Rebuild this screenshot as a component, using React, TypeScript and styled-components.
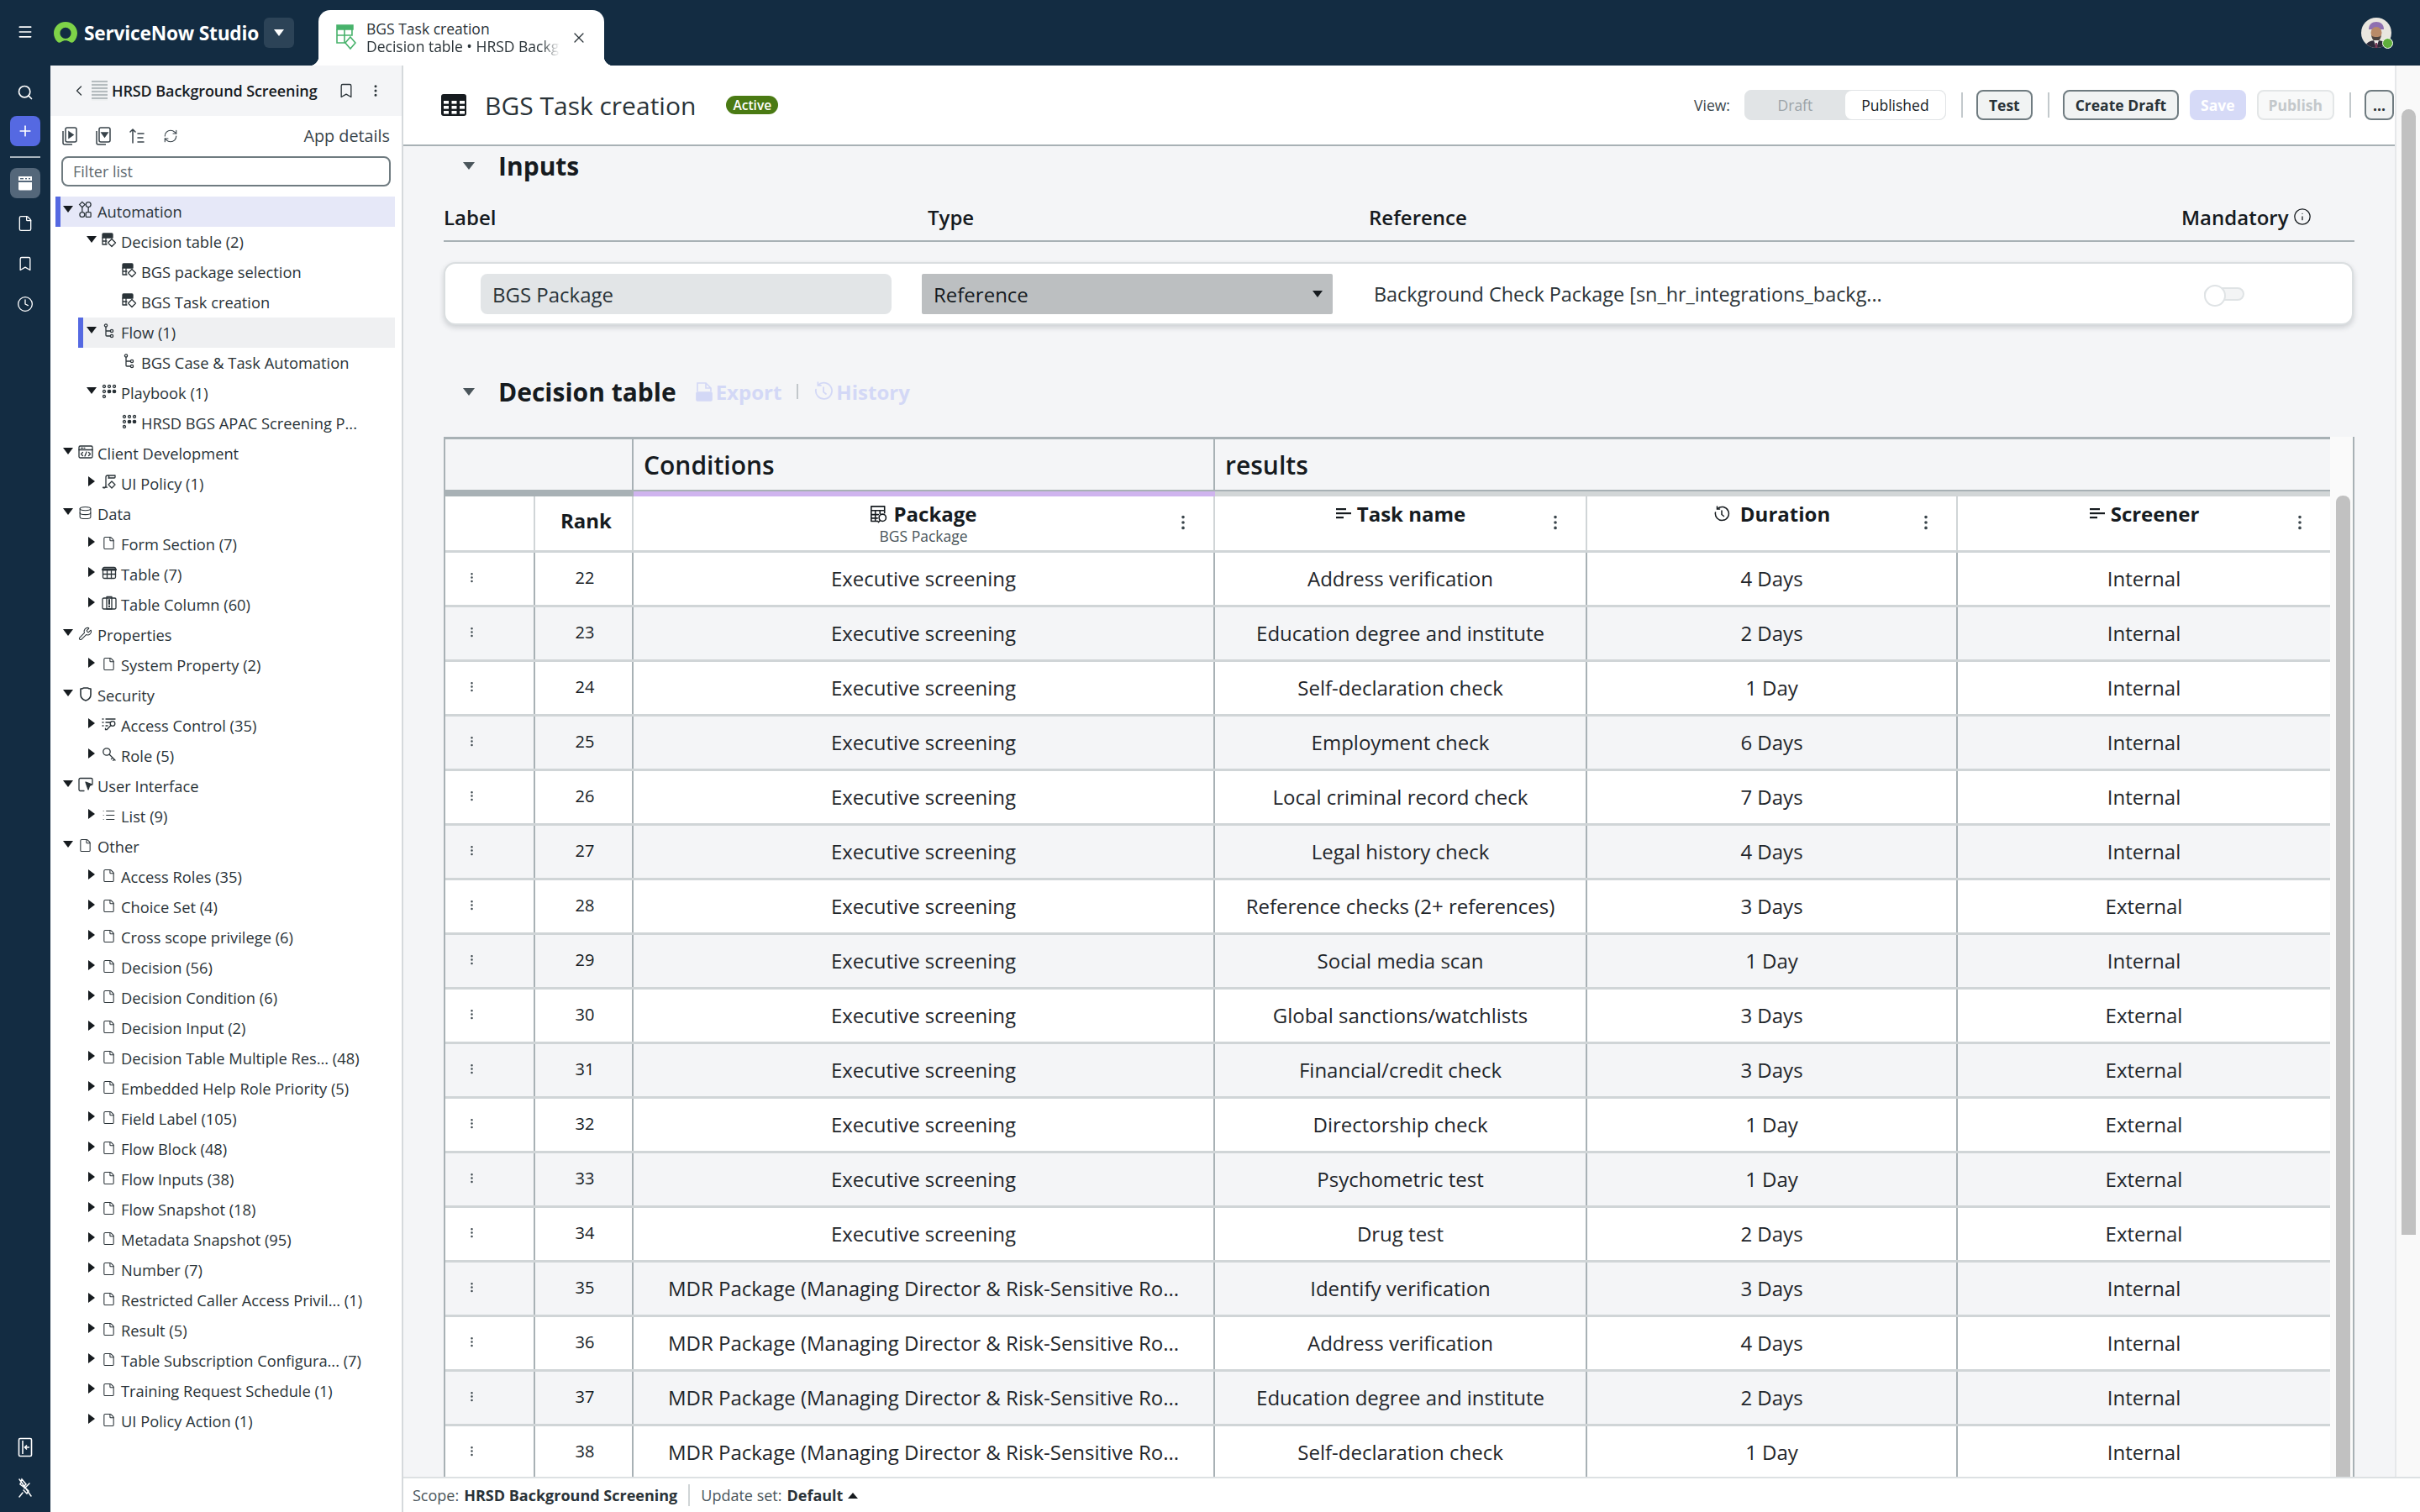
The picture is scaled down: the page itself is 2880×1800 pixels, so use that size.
import React from 'react'
import styled, { createGlobalStyle } from 'styled-components'
import { Bookmark, ChevronLeft, Clock, Database, EllipsisVertical, File, Info, List, Menu, Plus, RefreshCw, Search, Wrench, X } from 'lucide-react'

const GlobalStyle = createGlobalStyle`
  html, body { margin: 0; padding: 0; background: #fff; }
  body { font-family: "Open Sans", "Liberation Sans", sans-serif; color: #161b1f; }
  * { box-sizing: border-box; }
`

const navy = '#132c42'
const lineDark = '#a8b1b5'
const lineLight = '#d0d5d7'

const Shell = styled.div`
  width: 2880px;
  height: 1800px;
  display: flex;
  flex-direction: column;
  overflow: hidden;
`

/* top bar */
const TopBar = styled.header`
  height: 78px;
  flex: none;
  background: ${navy};
  display: flex;
  align-items: flex-end;
  color: #fff;
`
const MenuSlot = styled.div`
  width: 60px;
  height: 78px;
  display: flex;
  align-items: center;
  justify-content: center;
  padding-bottom: 2px;
`
const Brand = styled.div`
  height: 78px;
  display: flex;
  align-items: center;
  gap: 8px;
  margin-left: 4px;
  font-size: 22.7px;
  font-weight: 700;
  letter-spacing: -0.2px;
`
const BrandCaret = styled.div`
  width: 36px;
  height: 36px;
  border-radius: 6px;
  background: #2c4357;
  margin-left: -2px;
  display: flex;
  align-items: center;
  justify-content: center;
`
const CaretDown = styled.span<{ $size?: number; $color?: string }>`
  display: block;
  width: 0;
  height: 0;
  border-left: ${p => p.$size ?? 6}px solid transparent;
  border-right: ${p => p.$size ?? 6}px solid transparent;
  border-top: ${p => (p.$size ?? 6) + 2}px solid ${p => p.$color ?? '#161b1f'};
`
const CaretRight = styled.span`
  display: block;
  width: 0;
  height: 0;
  border-top: 6px solid transparent;
  border-bottom: 6px solid transparent;
  border-left: 8px solid #161b1f;
`
const CaretUp = styled.span`
  display: block;
  width: 0;
  height: 0;
  border-left: 6px solid transparent;
  border-right: 6px solid transparent;
  border-bottom: 7px solid #161b1f;
`
const Tab = styled.div`
  position: relative;
  width: 340px;
  height: 66px;
  margin-left: 29px;
  background: #fff;
  border-radius: 14px 14px 0 0;
  color: #2a3338;
  display: flex;
  align-items: center;
  padding: 0 20px 0 21px;
  gap: 12px;
  &::before, &::after {
    content: '';
    position: absolute;
    bottom: 0;
    width: 11px;
    height: 11px;
  }
  &::before { left: -11px; background: radial-gradient(circle at 0 0, transparent 11px, #fff 11.5px); }
  &::after { right: -11px; background: radial-gradient(circle at 100% 0, transparent 11px, #fff 11.5px); }
`
const TabText = styled.div`
  width: 238px;
  margin-right: -6px;
  font-size: 17.5px;
  line-height: 21px;
  white-space: nowrap;
`
const TabSub = styled.div`
  -webkit-mask-image: linear-gradient(to right, #000 88%, transparent 97%);
  mask-image: linear-gradient(to right, #000 88%, transparent 97%);
`
const Spacer = styled.div`
  flex: 1;
`
const AvatarSlot = styled.div`
  position: relative;
  width: 36px;
  height: 36px;
  margin: 0 34px 21px 0;
`
const AvatarBadge = styled.span`
  position: absolute;
  right: -2px;
  bottom: -1px;
  width: 13px;
  height: 13px;
  border-radius: 50%;
  background: #5fae3c;
  border: 1px solid #fff;
`

/* body */
const Body = styled.div`
  flex: 1;
  min-height: 0;
  display: flex;
`
const Rail = styled.nav`
  width: 60px;
  flex: none;
  background: ${navy};
  color: #fff;
  display: flex;
  flex-direction: column;
  align-items: center;
  padding-top: 14px;
`
const RailIcon = styled.div<{ $bg?: string; $mb?: number }>`
  width: 36px;
  height: 36px;
  border-radius: 8px;
  background: ${p => p.$bg ?? 'transparent'};
  display: flex;
  align-items: center;
  justify-content: center;
  margin-bottom: ${p => p.$mb ?? 12}px;
`
const RailDivider = styled.div`
  width: 36px;
  height: 2px;
  background: #a8b4bd;
  margin-bottom: 12px;
`
const RailGap = styled.div`
  flex: 1;
`

/* sidebar */
const Side = styled.aside`
  width: 420px;
  flex: none;
  background: #fff;
  border-right: 2px solid #d5d9dc;
  display: flex;
  flex-direction: column;
`
const SideHead = styled.div`
  height: 60px;
  background: #f4f5f7;
  display: flex;
  align-items: center;
  padding: 0 22px 0 24px;
  color: #2a3338;
`
const SideTitle = styled.div`
  flex: 1;
  margin-left: 5px;
  font-size: 18px;
  font-weight: 600;
  color: #161b1f;
  white-space: nowrap;
  letter-spacing: -0.1px;
`
const AppLogo = styled.div`
  margin-left: 5px;
  width: 19px;
  height: 24px;
  background: repeating-linear-gradient(to bottom, #b5bcbf 0 2px, #eef0f1 2px 4px);
`
const SideTools = styled.div`
  height: 48px;
  display: flex;
  align-items: center;
  padding: 0 14px 0 14px;
  gap: 22px;
  color: #38434a;
`
const AppDetails = styled.div`
  margin-left: auto;
  margin-top: -2px;
  font-size: 19.8px;
  color: #38434a;
`
const FilterBox = styled.div`
  margin: 0 13px 0 13px;
  height: 36px;
  border: 2px solid #6f7b80;
  border-radius: 8px;
  padding-left: 12px;
  display: flex;
  align-items: center;
  font-size: 18px;
  color: #5e696e;
`
const Tree = styled.div`
  margin: 12px 8px 0 6px;
`
const TreeRow = styled.div<{ $level: number; $mark?: 'primary' | 'secondary' }>`
  height: 36px;
  display: flex;
  align-items: center;
  gap: 5.5px;
  padding-bottom: 2px;
  font-size: 18.3px;
  color: #2a3338;
  white-space: nowrap;
  margin-left: ${p => (p.$mark === 'secondary' ? 27 : 0)}px;
  padding-left: ${p => (p.$mark === 'secondary' ? 4 : [3, 31, 55][p.$level])}px;
  border-left: 6px solid ${p => (p.$mark ? '#5569e2' : 'transparent')};
  background: ${p => (p.$mark === 'primary' ? '#e6e8f8' : p.$mark === 'secondary' ? '#eff0f2' : 'transparent')};
`
const ArrowSlot = styled.span`
  width: 12px;
  flex: none;
  display: flex;
  justify-content: center;
  margin-top: -5px;
`
const TreeIcon = styled.span`
  width: 18px;
  height: 18px;
  flex: none;
  display: flex;
  align-items: center;
  justify-content: center;
  margin-top: -2px;
  color: #2a3338;
`

/* main */
const Main = styled.main`
  flex: 1;
  min-width: 0;
  display: flex;
  flex-direction: column;
`
const MainFrame = styled.div`
  position: relative;
  flex: 1;
  min-height: 0;
  display: flex;
  flex-direction: column;
  overflow: hidden;
  background: #f4f5f7;
  padding-right: 30px;
`
const PageScroll = styled.div`
  position: absolute;
  top: 0;
  right: 0;
  bottom: 0;
  width: 30px;
  background: #f9f9f9;
  border-left: 2px solid #e6e8ea;
`
const PageThumb = styled.div`
  position: absolute;
  top: 52px;
  left: 6px;
  width: 17px;
  height: 1340px;
  border-radius: 9px 9px 0 0;
  background: #c1c1c1;
`
const TitleBar = styled.div`
  height: 96px;
  flex: none;
  background: #fff;
  border-bottom: 2px solid ${lineDark};
  display: flex;
  align-items: center;
  padding: 0 1px 0 45px;
`
const PageTitle = styled.h1`
  margin: 0 0 0 22px;
  font-size: 30px;
  font-weight: 400;
  color: #2a3338;
`
const ActiveBadge = styled.span`
  margin-left: 36px;
  height: 22px;
  width: 62px;
  border-radius: 11px;
  background: #4a7a13;
  color: #fff;
  font-size: 15.5px;
  font-weight: 600;
  display: flex;
  align-items: center;
  justify-content: center;
`
const ViewLabel = styled.span`
  margin-left: auto;
  font-size: 17.5px;
  color: #3b464c;
  margin-right: 17px;
`
const Segments = styled.div`
  width: 240px;
  height: 36px;
  border-radius: 8px;
  background: #e1e4e6;
  border: 1px solid #e1e4e6;
  display: flex;
`
const Segment = styled.div<{ $on?: boolean }>`
  flex: 1;
  display: flex;
  align-items: center;
  justify-content: center;
  font-size: 17.5px;
  border-radius: 8px;
  font-weight: 500;
  color: ${p => (p.$on ? '#161b1f' : '#9ba3a8')};
  background: ${p => (p.$on ? '#fff' : 'transparent')};
`
const BarSep = styled.span`
  width: 2px;
  height: 30px;
  background: #c3c9cc;
  margin: 0 16px 0 18px;
`
const ActionButton = styled.button<{ $kind?: 'solid' | 'ghost' | 'more' }>`
  height: 36px;
  width: ${p => (p.$kind === 'more' ? '35px' : 'auto')};
  padding: 0 ${p => (p.$kind === 'more' ? 0 : p.$kind === 'solid' ? 11 : p.$kind === 'ghost' ? 12 : 13)}px;
  border-radius: 8px;
  font-family: inherit;
  font-size: 17.5px;
  font-weight: 700;
  white-space: nowrap;
  color: ${p => (p.$kind === 'solid' ? '#fff' : p.$kind === 'ghost' ? '#c3c8cb' : '#2a3338')};
  background: ${p => (p.$kind === 'solid' ? '#d6daf7' : p.$kind === 'ghost' ? '#f8f9f9' : '#f1f3f3')};
  border: 2px solid ${p => (p.$kind === 'solid' ? '#d6daf7' : p.$kind === 'ghost' ? '#e3e6e7' : '#6f7b80')};
`
const ButtonGroup = styled.div`
  display: flex;
  gap: 13px;
`
const Content = styled.div`
  flex: 1;
  min-height: 0;
  padding: 3px 0 0 48px;
  overflow: hidden;
`
const SectionHead = styled.div`
  height: 40px;
  display: flex;
  align-items: center;
  padding-left: 23px;
`
const SectionTitle = styled.h2`
  margin: 0 22px 0 28px;
  font-size: 30px;
  font-weight: 700;
  color: #161b1f;
  white-space: nowrap;
`
const SectionLink = styled.span`
  display: flex;
  align-items: center;
  gap: 3px;
  font-size: 24px;
  font-weight: 700;
  color: #d3d8f6;
`
const LinkSep = styled.span`
  width: 2px;
  height: 18px;
  margin: 0 18px;
  background: #c2c7cb;
`
const InputColumns = styled.div`
  margin-top: 23px;
  width: 2274px;
  height: 48px;
  padding-bottom: 10px;
  border-bottom: 2px solid ${lineDark};
  display: grid;
  grid-template-columns: 576px 525px 967px 1fr;
  align-items: center;
  font-size: 24px;
  font-weight: 600;
`
const MandatoryHead = styled.span`
  display: flex;
  align-items: center;
  gap: 5px;
`
const InputCard = styled.div`
  margin-top: 24px;
  width: 2273px;
  height: 75px;
  background: #fff;
  border: 2px solid #dadee0;
  border-radius: 14px;
  box-shadow: 0 3px 6px rgba(30, 40, 50, 0.18);
  display: flex;
  align-items: center;
  padding: 1px 0 0 42px;
  font-size: 24px;
`
const LabelField = styled.div`
  width: 489px;
  height: 48px;
  border-radius: 8px;
  background: #e2e5e7;
  padding-left: 14px;
  display: flex;
  align-items: center;
  color: #2a3338;
`
const TypeField = styled.div`
  width: 489px;
  height: 48px;
  margin-left: 36px;
  border-radius: 2px;
  background: #bcbfc1;
  padding: 0 12px 0 14px;
  display: flex;
  align-items: center;
  justify-content: space-between;
  color: #161b1f;
`
const ReferenceText = styled.div`
  margin-left: 49px;
  width: 988px;
  font-size: 23.4px;
  white-space: nowrap;
  color: #2a3338;
`
const Toggle = styled.div`
  position: relative;
  width: 48px;
  height: 16px;
  border: 2px solid #dfe3e5;
  border-radius: 8px;
  background: #f3f4f5;
  &::before {
    content: '';
    position: absolute;
    left: -2px;
    top: -5px;
    width: 22px;
    height: 22px;
    border-radius: 50%;
    background: #fff;
    border: 2px solid #dfe3e5;
  }
`
const DecisionHead = styled(SectionHead)`
  margin-top: 59px;
`
const TableFrame = styled.div`
  margin-top: 34px;
  width: 2274px;
  display: flex;
`
const TableArea = styled.div`
  width: 2245px;
  flex: none;
  border-left: 2px solid ${lineDark};
  border-top: 3px solid ${lineDark};
`
const InnerTrack = styled.div`
  width: 29px;
  flex: none;
  background: #fafafa;
  border-right: 2px solid ${lineDark};
  padding: 70px 0 0 7px;
`
const InnerThumb = styled.div`
  height: 1400px;
  width: 17px;
  border-radius: 8px 8px 0 0;
  background: #c1c1c1;
`
const gridCols = '107px 117px 692px 443px 441px 443px'
const GroupRow = styled.div`
  display: grid;
  grid-template-columns: 224px 692px 1327px;
  height: 60px;
`
const GroupCell = styled.div<{ $line?: boolean }>`
  display: flex;
  align-items: center;
  padding-left: 12px;
  font-size: 30px;
  font-weight: 600;
  color: #161b1f;
  border-right: ${p => (p.$line ? `2px solid ${lineDark}` : 'none')};
`
const StripeRow = styled.div`
  display: grid;
  grid-template-columns: 224px 692px 1327px;
  height: 8px;
  border-top: 2px solid ${lineDark};
`
const Stripe = styled.div<{ $color: string }>`
  background: ${p => p.$color};
`
const GridRow = styled.div<{ $shade?: boolean; $h: number }>`
  display: grid;
  grid-template-columns: ${gridCols};
  height: ${p => p.$h}px;
  background: ${p => (p.$shade ? '#f4f5f7' : '#fff')};
  border-bottom: 3px solid ${lineLight};
`
const Cell = styled.div<{ $last?: boolean }>`
  display: flex;
  align-items: center;
  justify-content: center;
  padding-bottom: 2px;
  white-space: nowrap;
  font-size: 24px;
  color: #1f262b;
  border-right: ${p => (p.$last ? 'none' : `2px solid ${lineDark}`)};
`
const HandleCell = styled(Cell)`
  padding: 0 42px 4px 0;
  color: #3b464c;
`
const RankCell = styled(Cell)`
  font-size: 20px;
  padding: 0 0 3px 3px;
  color: #161b1f;
`
const HeadCell = styled.div<{ $last?: boolean }>`
  position: relative;
  display: flex;
  flex-direction: column;
  align-items: center;
  padding-top: 6px;
  background: #fff;
  border-right: ${p => (p.$last ? 'none' : `2px solid ${lineLight}`)};
`
const RankHead = styled.div`
  display: flex;
  align-items: center;
  justify-content: center;
  padding: 0 0 8px 6px;
  font-size: 24px;
  font-weight: 700;
  color: #161b1f;
  border-right: 2px solid ${lineLight};
`
const HeadLine = styled.div<{ $gap?: number }>`
  display: flex;
  align-items: center;
  gap: ${p => p.$gap ?? 6}px;
  font-size: 24px;
  line-height: 30px;
  font-weight: 700;
  color: #161b1f;
`
const HeadSub = styled.div`
  font-size: 17.5px;
  line-height: 22px;
  color: #4a555b;
`
const HeadMenu = styled.span`
  position: absolute;
  right: 25px;
  top: 20px;
  color: #3b464c;
`
const StatusBar = styled.footer`
  height: 42px;
  flex: none;
  background: #fff;
  border-top: 2px solid #dde1e3;
  display: flex;
  align-items: center;
  padding-left: 11px;
  font-size: 18px;
  color: #4a555b;
`
const StatusStrong = styled.b`
  margin-left: 6px;
  font-weight: 700;
  color: #2a3338;
`
const StatusCaret = styled.span`
  margin-left: 6px;
`
const StatusSep = styled.span`
  width: 2px;
  height: 26px;
  margin: 0 13px;
  background: #d0d5d7;
`
const KebabGap = styled.span`
  display: flex;
  margin-left: 16px;
`

/* hand drawn icons */
const Svg = ({ s = 18, children }: { s?: number; children: React.ReactNode }) => (
  <svg width={s} height={s} viewBox="0 0 18 18" fill="none" stroke="currentColor" strokeWidth="1.3" strokeLinecap="round" strokeLinejoin="round">
    {children}
  </svg>
)
const IconAutomation = () => (
  <svg width="17" height="22" viewBox="0 0 18 24" fill="none" stroke="currentColor" strokeWidth="1.4">
    <path d="M5 1.500l3.500 3.500L5 8.500 1.500 5z" />
    <circle cx="13" cy="5" r="3.200" />
    <circle cx="5" cy="18" r="3.200" />
    <rect x="9.800" y="14.800" width="6.400" height="6.400" rx="1" />
    <path d="M5 8.500v6M13 8.200v6.600" />
  </svg>
)
const IconDecision = () => (
  <Svg>
    <path d="M2 1h10a1 1 0 0 1 1 1v4H1V2a1 1 0 0 1 1-1z" fill="currentColor" />
    <path d="M1 6v8h5M1 10h5M5 6v8" />
    <path d="M12 7.500l4.500 4.500-4.500 4.500L7.500 12z" />
  </Svg>
)
const IconFlow = () => (
  <Svg>
    <circle cx="5" cy="2.500" r="1.600" />
    <path d="M5 4.100V14a1 1 0 0 0 1 1h4M5 9h5" />
    <circle cx="12" cy="9" r="1.600" />
    <circle cx="12" cy="15" r="1.600" />
  </Svg>
)
const IconPlaybook = () => (
  <Svg>
    {[[3, 3], [9, 3], [15, 3], [3, 9], [3, 15]].map(([x, y]) => <circle key={`${x}${y}`} cx={x} cy={y} r="1.500" />)}
    {[[9, 9], [15, 9]].map(([x, y]) => <circle key={`${x}${y}`} cx={x} cy={y} r="1.700" fill="currentColor" />)}
  </Svg>
)
const IconClient = () => (
  <Svg>
    <rect x="1" y="2" width="16" height="14" rx="1.500" />
    <path d="M1 6.500h16M3.500 4.300h2M7 4.300h1M5.500 9.500l-2 2 2 2M12.500 9.500l2 2-2 2M10 9l-2 5" />
  </Svg>
)
const IconPolicy = () => (
  <Svg>
    <path d="M5 14V3a2 2 0 0 1 2-2h9v2a1 1 0 0 1-1 1H8" />
    <path d="M8 1.500A2 2 0 0 1 8.500 4M5 14a2 2 0 0 1-3.500 1.200h5" />
    <path d="M12 8l4 4-4 4-4-4z" />
  </Svg>
)
const IconColumn = () => (
  <Svg>
    <rect x="1" y="3" width="16" height="13" rx="1.500" />
    <path d="M6 1.500h6V16H6z" />
    <path d="M9 5v5M9 12.500v.8" strokeWidth="2" />
  </Svg>
)
const IconAccess = () => (
  <Svg>
    <path d="M1 3h1M5 3h11M1 7h1M5 7h5M1 11h1M5 11h2" />
    <circle cx="13" cy="8.500" r="2.800" />
    <path d="M11 10.500l-5 5.200h-1.500v-1.500" />
  </Svg>
)
const IconKey = () => (
  <Svg>
    <circle cx="6" cy="6" r="4.200" />
    <path d="M9 9l7 7M13 13l-1.600 1.600M15 15l-1.400 1.400" />
  </Svg>
)
const IconUi = () => (
  <Svg>
    <path d="M7 16.500H2.500a1.500 1.500 0 0 1-1.500-1.500V3a1.500 1.500 0 0 1 1.500-1.500h13A1.500 1.500 0 0 1 17 3v5" />
    <path d="M9 6l8 3-3.500 1.500L12 15z" fill="currentColor" />
  </Svg>
)
const IconShield = () => (
  <svg width="14" height="17" viewBox="0 0 14 17" fill="none" stroke="currentColor" strokeWidth="1.600" strokeLinejoin="round">
    <path d="M1 2c2 0 3-.4 3.500-1h5c.5.6 1.500 1 3.500 1v7c0 3.500-3 6-6 7-3-1-6-3.500-6-7z" />
  </svg>
)
const IconTableGrid = () => (
  <Svg>
    <rect x="1.500" y="2.500" width="15" height="13" rx="1.500" />
    <path d="M1.500 5h15" strokeWidth="3" />
    <path d="M1.500 10.500h15M6.500 5v10.500M11.500 5v10.500" />
  </Svg>
)
const IconLookup = () => (
  <Svg s={22}>
    <path d="M8 16H1.500V1.500h13V8M1.500 5.500h13M1.500 9.500h7M1.500 13h6M5.500 5.500V16M10 5.500v3" />
    <circle cx="12.500" cy="12.500" r="3.400" />
    <path d="M10.200 15.200L8.500 17" />
  </Svg>
)
const IconTextLines = () => (
  <svg width="20" height="20" viewBox="0 0 20 20" fill="currentColor">
    <rect x="1" y="3" width="12" height="2.200" />
    <rect x="1" y="8" width="18" height="2.200" />
    <rect x="1" y="13" width="9" height="2.200" />
  </svg>
)
const IconHistory = ({ s = 20 }: { s?: number }) => (
  <svg width={s} height={s} viewBox="0 0 20 20" fill="none" stroke="currentColor" strokeWidth="1.500" strokeLinecap="round">
    <path d="M5 3.500A8 8 0 1 1 2.500 8" />
    <path d="M4.500 1v3h3M10 6v4.500l2.500 2" />
  </svg>
)
const IconExport = () => (
  <svg width="22" height="24" viewBox="0 0 20 24" fill="none" stroke="currentColor" strokeWidth="1.600">
    <path d="M2 12V2h10l6 6v4M12 2v6h6" />
    <rect x="1" y="13" width="18" height="10" rx="1" fill="currentColor" />
  </svg>
)
const IconGridSolid = () => (
  <svg width="30" height="26" viewBox="0 0 30 26" fill="#161b1f">
    <rect width="30" height="26" rx="3" />
    {[8, 14, 20].map(y => [3, 12.5, 22].map(x => <rect key={`${x}-${y}`} x={x} y={y} width="6" height="3.600" fill="#fff" />))}
  </svg>
)
const IconPanel = () => (
  <svg width="18" height="24" viewBox="0 0 18 24" fill="none" stroke="currentColor" strokeWidth="1.600">
    <rect x="1.500" y="1.500" width="15" height="21" rx="1.500" />
    <path d="M6 4v16M14 12H9M11 9.500L8.500 12l2.500 2.500" />
  </svg>
)
const IconCollectionPlay = () => (
  <svg width="18" height="22" viewBox="0 0 18 22" fill="none" stroke="currentColor" strokeWidth="1.500">
    <path d="M1 5v14a2 2 0 0 0 2 2h9" />
    <rect x="4" y="1" width="13" height="17" rx="2" />
    <path d="M8 6l5 3.500-5 3.500z" fill="currentColor" />
  </svg>
)
const IconCollectionDown = () => (
  <svg width="18" height="22" viewBox="0 0 18 22" fill="none" stroke="currentColor" strokeWidth="1.500">
    <path d="M1 5v14a2 2 0 0 0 2 2h9" />
    <rect x="4" y="1" width="13" height="17" rx="2" />
    <path d="M7 7l3.500 5L14 7z" fill="currentColor" />
  </svg>
)
const IconSort = () => (
  <svg width="18" height="20" viewBox="0 0 18 20" fill="none" stroke="currentColor" strokeWidth="1.500" strokeLinecap="round">
    <path d="M4 18V2M1 5l3-3 3 3M10 7h7M10 12h6M10 17h7" />
  </svg>
)
const IconUnpin = () => (
  <svg width="18" height="26" viewBox="0 0 18 26" fill="none" stroke="currentColor" strokeWidth="1.500" strokeLinecap="round">
    <path d="M2 3l14 20M5 3l5 6-3 3-4-3zM8 14l6-6M10 14l3 3-2 3-4-4M6 19l-4 5" />
  </svg>
)
const IconStudio = () => (
  <svg width="20" height="20" viewBox="0 0 20 20" fill="#fff">
    <path d="M2 2h16v5H2z" />
    <path d="M2 9h16v8a1.500 1.500 0 0 1-1.500 1.500h-13A1.500 1.500 0 0 1 2 17z" />
    <rect x="4" y="4" width="4" height="1.400" fill="#54677a" />
    <rect x="10" y="4" width="2" height="1.400" fill="#54677a" />
    <rect x="14" y="4" width="2" height="1.400" fill="#54677a" />
  </svg>
)
const NowLogo = () => (
  <svg width="28" height="26" viewBox="0 0 28 26">
    <path fillRule="evenodd" fill="#7ed348" d="M14 0C6 0 0 6 0 13.400c0 3.800 1.600 7.600 4.400 10.400 1.200 1.200 3 1.200 4.400.2 1.500-1.100 3.300-1.700 5.200-1.700s3.700.6 5.200 1.700c1.400 1 3.200 1 4.400-.2C26.400 21 28 17.200 28 13.400 28 6 22 0 14 0zm0 20a6.600 6.600 0 1 1 0-13.200 6.600 6.600 0 0 1 0 13.200z" />
  </svg>
)
const TabDecisionIcon = () => (
  <svg width="24" height="36" viewBox="0 0 24 36" fill="none" stroke="#47b26b" strokeWidth="1.600">
    <path d="M1 3h19v5H1z" fill="#47b26b" />
    <path d="M1 8v16h10M1 15h18V8M10 8v16" />
    <path d="M17 17l6 7-6 7-6-7z" fill="#fff" />
  </svg>
)
const Avatar = () => (
  <svg width="36" height="36" viewBox="0 0 36 36">
    <defs>
      <clipPath id="av"><circle cx="18" cy="18" r="18" /></clipPath>
    </defs>
    <g clipPath="url(#av)">
      <rect width="36" height="36" fill="#e9e6df" />
      <path d="M9 14c0-6 4-9 9-9s9 3 9 9z" fill="#8f70b0" />
      <ellipse cx="18" cy="18" rx="6.500" ry="7" fill="#b98a68" />
      <path d="M12 21c1 5 3 7 6 7s5-2 6-7c-2 2-4 2-6 2s-4 0-6-2z" fill="#4d4340" />
      <path d="M5 36c0-6 5-9 13-9s13 3 13 9z" fill="#2c2a3a" />
      <path d="M15 27l3 9 3-9z" fill="#ece8e6" />
      <path d="M17 30h2l.5 6h-3z" fill="#7a3a5a" />
    </g>
  </svg>
)

type Node = { label: string; level: number; icon: React.ReactNode; open?: boolean; leaf?: boolean; mark?: 'primary' | 'secondary' }

const doc = <File size={17} strokeWidth={1.5} />
const others = ['Access Roles (35)', 'Choice Set (4)', 'Cross scope privilege (6)', 'Decision (56)', 'Decision Condition (6)', 'Decision Input (2)', 'Decision Table Multiple Res...  (48)', 'Embedded Help Role Priority (5)', 'Field Label (105)', 'Flow Block (48)', 'Flow Inputs (38)', 'Flow Snapshot (18)', 'Metadata Snapshot (95)', 'Number (7)', 'Restricted Caller Access Privil...  (1)', 'Result (5)', 'Table Subscription Configura...  (7)', 'Training Request Schedule (1)', 'UI Policy Action (1)']

const nodes: Node[] = [
  { label: 'Automation', level: 0, icon: <IconAutomation />, open: true, mark: 'primary' },
  { label: 'Decision table (2)', level: 1, icon: <IconDecision />, open: true },
  { label: 'BGS package selection', level: 2, icon: <IconDecision />, leaf: true },
  { label: 'BGS Task creation', level: 2, icon: <IconDecision />, leaf: true },
  { label: 'Flow (1)', level: 1, icon: <IconFlow />, open: true, mark: 'secondary' },
  { label: 'BGS Case & Task Automation', level: 2, icon: <IconFlow />, leaf: true },
  { label: 'Playbook (1)', level: 1, icon: <IconPlaybook />, open: true },
  { label: 'HRSD BGS APAC Screening P...', level: 2, icon: <IconPlaybook />, leaf: true },
  { label: 'Client Development', level: 0, icon: <IconClient />, open: true },
  { label: 'UI Policy (1)', level: 1, icon: <IconPolicy /> },
  { label: 'Data', level: 0, icon: <Database size={17} strokeWidth={1.5} />, open: true },
  { label: 'Form Section (7)', level: 1, icon: doc },
  { label: 'Table (7)', level: 1, icon: <IconTableGrid /> },
  { label: 'Table Column (60)', level: 1, icon: <IconColumn /> },
  { label: 'Properties', level: 0, icon: <Wrench size={17} strokeWidth={1.5} />, open: true },
  { label: 'System Property (2)', level: 1, icon: doc },
  { label: 'Security', level: 0, icon: <IconShield />, open: true },
  { label: 'Access Control (35)', level: 1, icon: <IconAccess /> },
  { label: 'Role (5)', level: 1, icon: <IconKey /> },
  { label: 'User Interface', level: 0, icon: <IconUi />, open: true },
  { label: 'List (9)', level: 1, icon: <List size={17} strokeWidth={1.5} /> },
  { label: 'Other', level: 0, icon: doc, open: true },
  ...others.map(label => ({ label, level: 1, icon: doc })),
]

const mdr = 'MDR Package (Managing Director & Risk-Sensitive Ro...'
const exec = 'Executive screening'
const rows = [
  [22, exec, 'Address verification', '4 Days', 'Internal'],
  [23, exec, 'Education degree and institute', '2 Days', 'Internal'],
  [24, exec, 'Self-declaration check', '1 Day', 'Internal'],
  [25, exec, 'Employment check', '6 Days', 'Internal'],
  [26, exec, 'Local criminal record check', '7 Days', 'Internal'],
  [27, exec, 'Legal history check', '4 Days', 'Internal'],
  [28, exec, 'Reference checks (2+ references)', '3 Days', 'External'],
  [29, exec, 'Social media scan', '1 Day', 'Internal'],
  [30, exec, 'Global sanctions/watchlists', '3 Days', 'External'],
  [31, exec, 'Financial/credit check', '3 Days', 'External'],
  [32, exec, 'Directorship check', '1 Day', 'External'],
  [33, exec, 'Psychometric test', '1 Day', 'External'],
  [34, exec, 'Drug test', '2 Days', 'External'],
  [35, mdr, 'Identify verification', '3 Days', 'Internal'],
  [36, mdr, 'Address verification', '4 Days', 'Internal'],
  [37, mdr, 'Education degree and institute', '2 Days', 'Internal'],
  [38, mdr, 'Self-declaration check', '1 Day', 'Internal'],
] as const

export default function App() {
  return (
    <Shell>
      <GlobalStyle />
      <TopBar>
        <MenuSlot><Menu size={20} /></MenuSlot>
        <Brand>
          <NowLogo />
          ServiceNow Studio
          <BrandCaret><CaretDown $color="#fff" /></BrandCaret>
        </Brand>
        <Tab>
          <TabDecisionIcon />
          <TabText>
            BGS Task creation
            <TabSub>Decision table • HRSD Backg</TabSub>
          </TabText>
          <X size={20} strokeWidth={1.5} />
        </Tab>
        <Spacer />
        <AvatarSlot>
          <Avatar />
          <AvatarBadge />
        </AvatarSlot>
      </TopBar>
      <Body>
        <Rail>
          <RailIcon $mb={10}><Search size={20} /></RailIcon>
          <RailIcon $bg="#5569e2"><Plus size={20} /></RailIcon>
          <RailDivider />
          <RailIcon $bg="#54677a"><IconStudio /></RailIcon>
          <RailIcon><File size={20} strokeWidth={1.6} /></RailIcon>
          <RailIcon><Bookmark size={20} strokeWidth={1.6} /></RailIcon>
          <RailIcon><Clock size={20} strokeWidth={1.6} /></RailIcon>
          <RailGap />
          <RailIcon><IconPanel /></RailIcon>
          <RailIcon $mb={11}><IconUnpin /></RailIcon>
        </Rail>
        <Side>
          <SideHead>
            <ChevronLeft size={20} strokeWidth={1.5} />
            <AppLogo />
            <SideTitle>HRSD Background Screening</SideTitle>
            <Bookmark size={20} strokeWidth={1.6} />
            <KebabGap><EllipsisVertical size={18} /></KebabGap>
          </SideHead>
          <SideTools>
            <IconCollectionPlay />
            <IconCollectionDown />
            <IconSort />
            <RefreshCw size={18} strokeWidth={1.5} />
            <AppDetails>App details</AppDetails>
          </SideTools>
          <FilterBox>Filter list</FilterBox>
          <Tree>
            {nodes.map(n => (
              <TreeRow key={n.label} $level={n.level} $mark={n.mark}>
                <ArrowSlot>{n.leaf ? null : n.open ? <CaretDown /> : <CaretRight />}</ArrowSlot>
                <TreeIcon>{n.icon}</TreeIcon>
                {n.label}
              </TreeRow>
            ))}
          </Tree>
        </Side>
        <Main>
          <MainFrame>
            <PageScroll><PageThumb /></PageScroll>
            <TitleBar>
              <IconGridSolid />
              <PageTitle>BGS Task creation</PageTitle>
              <ActiveBadge>Active</ActiveBadge>
              <ViewLabel>View:</ViewLabel>
              <Segments>
                <Segment>Draft</Segment>
                <Segment $on>Published</Segment>
              </Segments>
              <BarSep />
              <ActionButton>Test</ActionButton>
              <BarSep />
              <ButtonGroup>
                <ActionButton>Create Draft</ActionButton>
                <ActionButton $kind="solid">Save</ActionButton>
                <ActionButton $kind="ghost">Publish</ActionButton>
              </ButtonGroup>
              <BarSep />
              <ActionButton $kind="more">...</ActionButton>
            </TitleBar>
            <Content>
              <SectionHead>
                <CaretDown $size={7} $color="#4a555b" />
                <SectionTitle>Inputs</SectionTitle>
              </SectionHead>
              <InputColumns>
                <span>Label</span>
                <span>Type</span>
                <span>Reference</span>
                <MandatoryHead>Mandatory <Info size={22} strokeWidth={1.4} /></MandatoryHead>
              </InputColumns>
              <InputCard>
                <LabelField>BGS Package</LabelField>
                <TypeField>Reference <CaretDown $color="#161b1f" /></TypeField>
                <ReferenceText>Background Check Package [sn_hr_integrations_backg...</ReferenceText>
                <Toggle />
              </InputCard>
              <DecisionHead>
                <CaretDown $size={7} $color="#4a555b" />
                <SectionTitle>Decision table</SectionTitle>
                <SectionLink><IconExport /> Export</SectionLink>
                <LinkSep />
                <SectionLink><IconHistory s={24} /> History</SectionLink>
              </DecisionHead>
              <TableFrame>
                <TableArea>
                  <GroupRow>
                    <GroupCell $line />
                    <GroupCell $line>Conditions</GroupCell>
                    <GroupCell>results</GroupCell>
                  </GroupRow>
                  <StripeRow>
                    <Stripe $color={lineDark} />
                    <Stripe $color="#cfb4ee" />
                    <Stripe $color="#d2d6d7" />
                  </StripeRow>
                  <GridRow $h={67}>
                    <RankHead />
                    <RankHead>Rank</RankHead>
                    <HeadCell>
                      <HeadLine><IconLookup /> Package</HeadLine>
                      <HeadSub>BGS Package</HeadSub>
                      <HeadMenu><EllipsisVertical size={22} /></HeadMenu>
                    </HeadCell>
                    <HeadCell>
                      <HeadLine><IconTextLines /> Task name</HeadLine>
                      <HeadMenu><EllipsisVertical size={22} /></HeadMenu>
                    </HeadCell>
                    <HeadCell>
                      <HeadLine $gap={12}><IconHistory /> Duration</HeadLine>
                      <HeadMenu><EllipsisVertical size={22} /></HeadMenu>
                    </HeadCell>
                    <HeadCell $last>
                      <HeadLine><IconTextLines /> Screener</HeadLine>
                      <HeadMenu><EllipsisVertical size={22} /></HeadMenu>
                    </HeadCell>
                  </GridRow>
                  {rows.map(([rank, pkg, task, duration, screener]) => (
                    <GridRow key={rank} $h={65} $shade={rank % 2 === 1}>
                      <HandleCell><EllipsisVertical size={15} /></HandleCell>
                      <RankCell>{rank}</RankCell>
                      <Cell>{pkg}</Cell>
                      <Cell>{task}</Cell>
                      <Cell>{duration}</Cell>
                      <Cell $last>{screener}</Cell>
                    </GridRow>
                  ))}
                </TableArea>
                <InnerTrack><InnerThumb /></InnerTrack>
              </TableFrame>
            </Content>
          </MainFrame>
          <StatusBar>
            Scope:
            <StatusStrong>HRSD Background Screening</StatusStrong>
            <StatusSep />
            Update set:
            <StatusStrong>Default</StatusStrong>
            <StatusCaret><CaretUp /></StatusCaret>
          </StatusBar>
        </Main>
      </Body>
    </Shell>
  )
}
